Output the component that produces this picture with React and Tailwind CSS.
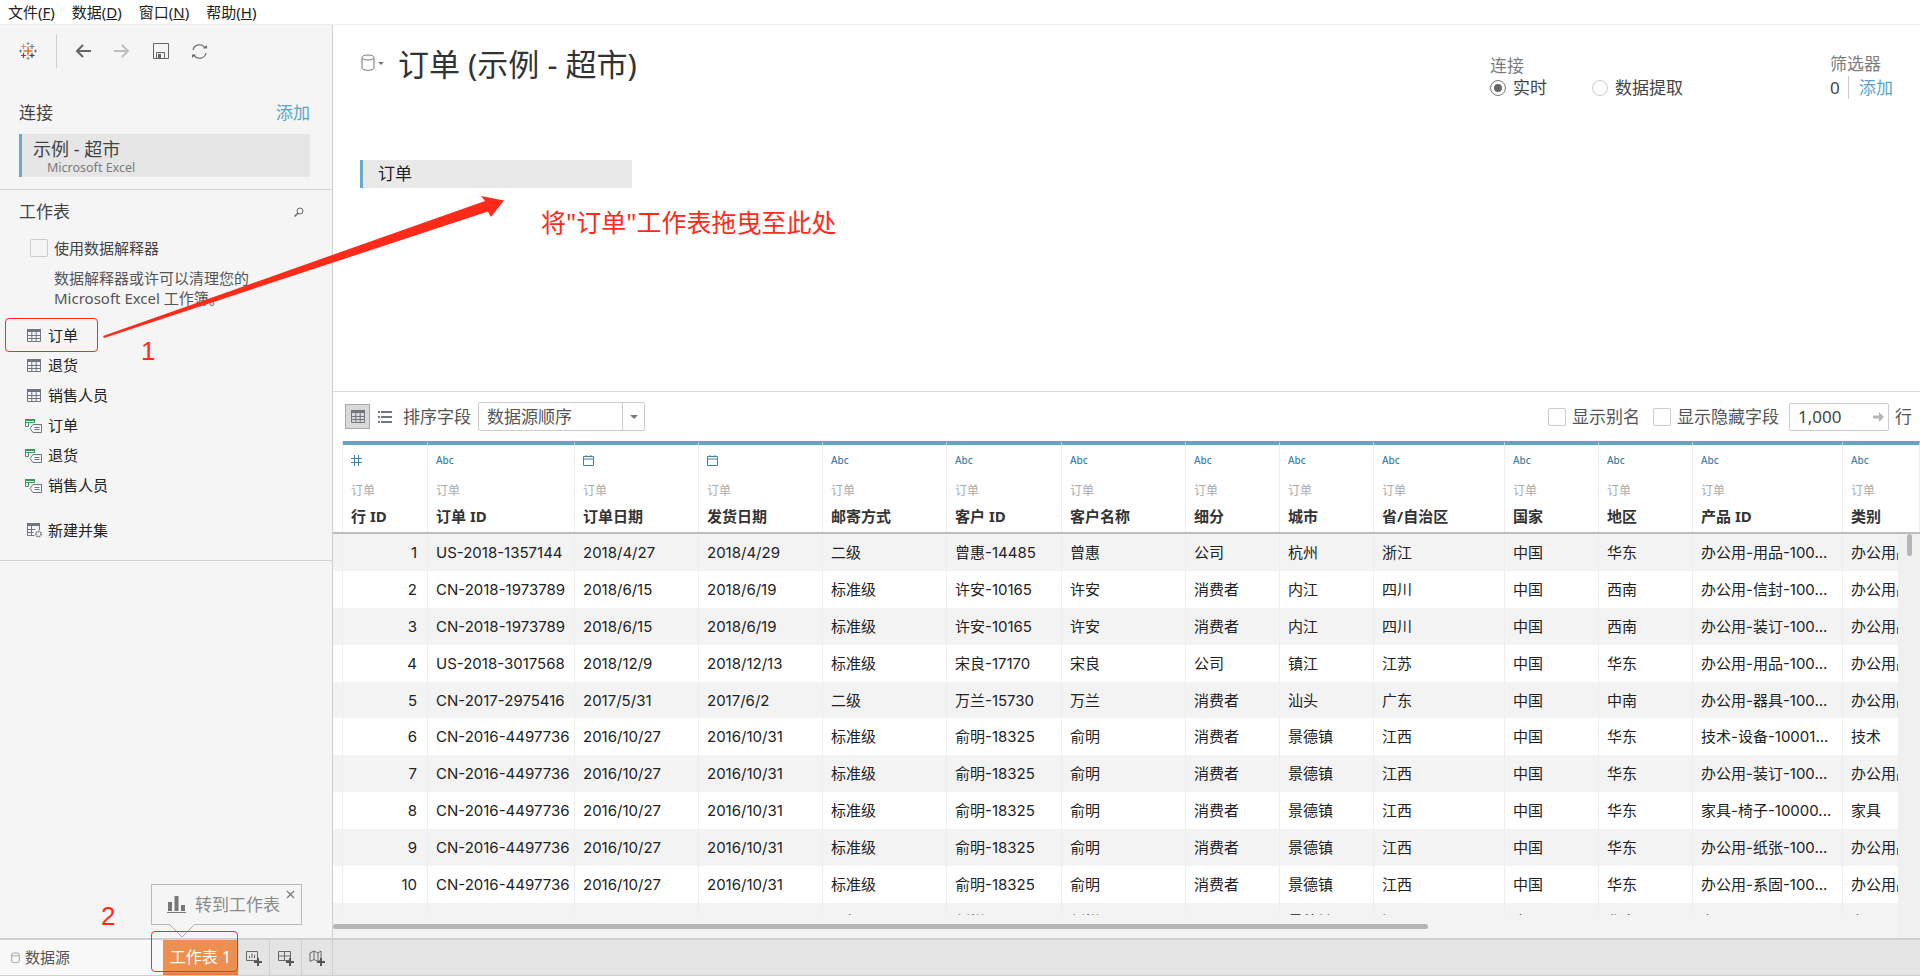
import React from 'react';

const FONT = "font-['Noto_Sans','Noto_Sans_CJK_SC',sans-serif]";
const GRID = 'grid grid-cols-[10px_85px_147px_124px_124px_124px_115px_124px_94px_94px_131px_94px_94px_150px_1fr]';

const columns = [
  ['num', '行 ID'],
  ['abc', '订单 ID'],
  ['date', '订单日期'],
  ['date', '发货日期'],
  ['abc', '邮寄方式'],
  ['abc', '客户 ID'],
  ['abc', '客户名称'],
  ['abc', '细分'],
  ['abc', '城市'],
  ['abc', '省/自治区'],
  ['abc', '国家'],
  ['abc', '地区'],
  ['abc', '产品 ID'],
  ['abc', '类别'],
];

const rows = [
  ['1', 'US-2018-1357144', '2018/4/27', '2018/4/29', '二级', '曾惠-14485', '曾惠', '公司', '杭州', '浙江', '中国', '华东', '办公用-用品-100...', '办公用品'],
  ['2', 'CN-2018-1973789', '2018/6/15', '2018/6/19', '标准级', '许安-10165', '许安', '消费者', '内江', '四川', '中国', '西南', '办公用-信封-100...', '办公用品'],
  ['3', 'CN-2018-1973789', '2018/6/15', '2018/6/19', '标准级', '许安-10165', '许安', '消费者', '内江', '四川', '中国', '西南', '办公用-装订-100...', '办公用品'],
  ['4', 'US-2018-3017568', '2018/12/9', '2018/12/13', '标准级', '宋良-17170', '宋良', '公司', '镇江', '江苏', '中国', '华东', '办公用-用品-100...', '办公用品'],
  ['5', 'CN-2017-2975416', '2017/5/31', '2017/6/2', '二级', '万兰-15730', '万兰', '消费者', '汕头', '广东', '中国', '中南', '办公用-器具-100...', '办公用品'],
  ['6', 'CN-2016-4497736', '2016/10/27', '2016/10/31', '标准级', '俞明-18325', '俞明', '消费者', '景德镇', '江西', '中国', '华东', '技术-设备-10001...', '技术'],
  ['7', 'CN-2016-4497736', '2016/10/27', '2016/10/31', '标准级', '俞明-18325', '俞明', '消费者', '景德镇', '江西', '中国', '华东', '办公用-装订-100...', '办公用品'],
  ['8', 'CN-2016-4497736', '2016/10/27', '2016/10/31', '标准级', '俞明-18325', '俞明', '消费者', '景德镇', '江西', '中国', '华东', '家具-椅子-10000...', '家具'],
  ['9', 'CN-2016-4497736', '2016/10/27', '2016/10/31', '标准级', '俞明-18325', '俞明', '消费者', '景德镇', '江西', '中国', '华东', '办公用-纸张-100...', '办公用品'],
  ['10', 'CN-2016-4497736', '2016/10/27', '2016/10/31', '标准级', '俞明-18325', '俞明', '消费者', '景德镇', '江西', '中国', '华东', '办公用-系固-100...', '办公用品'],
  ['11', 'CN-2015-4947890', '2015/12/22', '2015/12/24', '二级', '刘婵-20020', '刘婵', '公司', '景德镇', '江西', '中国', '华东', '办公用-用品-100...', '办公用品'],
];

const sheets = [
  ['table', '订单'],
  ['table', '退货'],
  ['table', '销售人员'],
  ['extract', '订单'],
  ['extract', '退货'],
  ['extract', '销售人员'],
];

const TableIcon = () => (
  <svg width="14" height="13" viewBox="0 0 14 13" className="shrink-0">
    <rect x="0" y="0" width="14" height="3" fill="#6f7683" />
    <path d="M.5 3v9.5h13V3M.5 6.5h13M.5 9.5h13M4.8 3v9.5M9.2 3v9.5" fill="none" stroke="#6f7683" />
  </svg>
);

const ExtractIcon = () => (
  <svg width="17" height="14" viewBox="0 0 17 14" className="shrink-0">
    <path d="M.5.5h9v3h-9zM.5 3.5v4h3v-4M3.5 3.5h6" fill="none" stroke="#2f9e5b" />
    <rect x="0" y="0" width="10" height="2" fill="#2f9e5b" />
    <path d="M8 5.5h8.5v8H8L5 9.5z" fill="#f5f5f5" stroke="#6f7683" />
    <path d="M9.5 8.5h5M9.5 10.5h5" stroke="#6f7683" />
  </svg>
);

const UnionIcon = () => (
  <svg width="16" height="15" viewBox="0 0 16 15" className="shrink-0">
    <rect x="0" y="0" width="13" height="3" fill="#6f7683" />
    <path d="M.5 3v9.5h7M12.5 3v4M.5 6.5h8M.5 9.5h6M4.5 3v9" fill="none" stroke="#6f7683" />
    <circle cx="11.5" cy="11" r="2.6" fill="none" stroke="#6f7683" strokeWidth="1.6" strokeDasharray="1.6 .7" />
  </svg>
);

const TableauLogo = () => (
  <svg width="18" height="18" viewBox="0 0 18 18">
    <path d="M9 4.5v9M4.5 9h9" stroke="#e8762b" strokeWidth="1.5" />
    <path d="M4.5 2v5M2 4.5h5" stroke="#f0913a" strokeWidth="1.2" />
    <path d="M13 2v5M10.5 4.5h5" stroke="#5b879b" strokeWidth="1.2" />
    <path d="M4.5 11v5M2 13.5h5" stroke="#c72037" strokeWidth="1.2" />
    <path d="M13 11v5M10.5 13.5h5" stroke="#1f447a" strokeWidth="1.2" />
    <path d="M9 0v3M7.5 1.5h3M9 15v3M7.5 16.5h3" stroke="#7099a6" />
    <path d="M1.5 7.5v3M0 9h3M16.5 7.5v3M15 9h3" stroke="#59879b" />
  </svg>
);

const Cylinder = ({ className = 'w-[14px] h-[18px]' }) => (
  <svg viewBox="0 0 14 18" className={className} fill="none" stroke="#777">
    <path d="M1 4v10c0 3 12 3 12 0V4" />
    <ellipse cx="7" cy="3.5" rx="6" ry="2.5" />
  </svg>
);

const FieldIcon = ({ type }) => {
  if (type === 'abc') return <span className="block text-[10px] leading-[12px] font-medium text-[#3f83a3]">Abc</span>;
  if (type === 'date') {
    return (
      <svg width="11" height="11" viewBox="0 0 11 11" fill="none" stroke="#3f83a3" className="mt-[1px]">
        <path d="M.5 1.5h10v9H.5zM.5 4h10M3 0v2M8 0v2" />
      </svg>
    );
  }
  return (
    <svg width="11" height="11" viewBox="0 0 11 11" fill="none" stroke="#3f83a3" className="mt-[1px]">
      <path d="M3.5 0v11M7.5 0v11M0 3.5h11M0 7.5h11" />
    </svg>
  );
};

const Checkbox = () => (
  <span className="block w-[18px] h-[18px] shrink-0 rounded-[2px] border border-[#cccccc]" />
);

const AddIcon = ({ d }) => (
  <svg width="16" height="16" viewBox="0 0 16 16" fill="none" stroke="#666">
    <path d={d} />
    <path d="M12 8v8M8 12h8" stroke="#555" strokeWidth="2" />
  </svg>
);

const Sidebar = () => (
  <aside className="w-[333px] shrink-0 border-r border-[#cfcfcf] bg-[#f5f5f5]">
    <div className="flex h-[34px] mt-[9px] items-center">
      <div className="ml-[19px] w-[18px]"><TableauLogo /></div>
      <div className="ml-[19px] h-[34px] w-px bg-[#cfcfcf]" />
      <svg width="16" height="14" viewBox="0 0 16 14" fill="none" stroke="#666" strokeWidth="2" className="ml-[18px]">
        <path d="M16 7H2M8 1L2 7l6 6" />
      </svg>
      <svg width="16" height="14" viewBox="0 0 16 14" fill="none" stroke="#bdbdbd" strokeWidth="2" className="ml-[23px]">
        <path d="M0 7h14M8 1l6 6-6 6" />
      </svg>
      <svg width="16" height="16" viewBox="0 0 16 16" fill="none" stroke="#666" className="ml-[23px]">
        <path d="M.5.5h15v15H.5zM3.5 15.5v-6h8v6" />
        <rect x="5" y="11" width="3" height="4" fill="#666" stroke="none" />
      </svg>
      <svg width="17" height="17" viewBox="0 0 17 17" fill="none" stroke="#666" strokeWidth="1.2" className="ml-[22px]">
        <path d="M2 7a6.500 6.500 0 0 1 12-2M15 10a6.500 6.500 0 0 1-12 2" />
        <path d="M12 5.500h4v-3.500z" fill="#666" stroke="none" />
        <path d="M5 11.500H1V15z" fill="#666" stroke="none" />
      </svg>
    </div>

    <div className="mt-[33px] mx-[19px] flex h-[24px] w-[291px] items-center justify-between text-[17px] text-[#444]">
      <span>连接</span>
      <span className="text-[#5aa3c7]">添加</span>
    </div>
    <div className="mt-[9px] ml-[19px] h-[43px] w-[291px] border-l-[3px] border-[#6aa9c7] bg-[#e6e6e6] pl-[11px]">
      <div className="h-[26px] text-[18px] leading-[31px] text-[#444]">示例 - 超市</div>
      <div className="pl-[14px] text-[12.5px] leading-[16px] text-[#7a7a7a]">Microsoft Excel</div>
    </div>

    <div className="mt-[12px] border-t border-[#d4d4d4] pt-[10px]">
      <div className="mx-[19px] flex h-[24px] items-center justify-between text-[17px] text-[#444]">
        <span>工作表</span>
        <svg width="10" height="10" viewBox="0 0 10 10" fill="none" stroke="#666" className="mr-[9px]">
          <circle cx="6" cy="4" r="3" />
          <path d="M4 6L.5 9.5" strokeWidth="1.5" />
        </svg>
      </div>
      <div className="mt-[13px] ml-[30px] flex items-center gap-[6px] text-[15px] text-[#444]">
        <Checkbox />
        <span>使用数据解释器</span>
      </div>
      <p className="mt-[8px] ml-[54px] w-[270px] text-[15px] leading-[20px] text-[#555]">
        数据解释器或许可以清理您的
        <br />
        Microsoft Excel 工作簿。
      </p>
      <ul className="mt-[13px]">
        {sheets.map(([type, name], i) => (
          <li key={i} className="flex h-[30px] items-center text-[15px] text-[#222]">
            <span className="ml-[25px] flex w-[23px] justify-start">
              {type === 'table' ? <span className="ml-[2px]"><TableIcon /></span> : <ExtractIcon />}
            </span>
            {name}
          </li>
        ))}
      </ul>
      <div className="mt-[15px] ml-[27px] flex h-[30px] items-center text-[15px] text-[#222]">
        <span className="w-[21px]"><UnionIcon /></span>
        新建并集
      </div>
      <div className="mt-[14px] border-t border-[#d4d4d4]" />
    </div>
  </aside>
);

const Header = () => (
  <section className="h-[367px] shrink-0 border-b border-[#d9d9d9] bg-white">
    <div className="flex items-start pt-[19px]">
      <div className="ml-[28px] mt-[10px] flex items-center">
        <Cylinder />
        <span className="ml-[3px] h-0 w-0 border-x-[3px] border-t-[3px] border-x-transparent border-t-[#777]" />
      </div>
      <h1 className="ml-[14px] text-[31px] leading-[40px] text-[#333]">订单 (示例 - 超市)</h1>
      <div className="ml-auto mt-[11px] w-[340px] text-[17px] leading-[22px]">
        <div className="text-[#7c7c7c]">连接</div>
        <div className="flex items-center text-[#444]">
          <span className="flex h-[16px] w-[16px] items-center justify-center rounded-full border border-[#777]">
            <span className="h-[8px] w-[8px] rounded-full bg-[#666]" />
          </span>
          <span className="ml-[7px] w-[79px]">实时</span>
          <span className="h-[16px] w-[16px] rounded-full border border-[#cccccc]" />
          <span className="ml-[7px]">数据提取</span>
        </div>
      </div>
      <div className="mt-[9px] w-[90px] text-[17px] leading-[22px]">
        <div className="text-[#7c7c7c]">筛选器</div>
        <div className="mt-[1px] flex items-center">
          <span className="w-[18px] text-[#444]">0</span>
          <span className="h-[23px] w-px bg-[#cccccc]" />
          <span className="ml-[10px] text-[#5aa3c7]">添加</span>
        </div>
      </div>
    </div>
    <div className="mt-[61px] ml-[27px] flex h-[28px] w-[272px] items-center border-l-[3px] border-[#6aa9c7] bg-[#e9e9e9] pl-[15px] text-[17px] text-[#222]">
      订单
    </div>
  </section>
);

const Toolbar = () => (
  <div className="flex h-[49px] shrink-0 items-center bg-white text-[17px] text-[#555]">
    <span className="ml-[12px] flex h-[25px] w-[25px] items-center justify-center border border-[#aaa] bg-[#d9d9d9]">
      <TableIcon />
    </span>
    <svg width="14" height="12" viewBox="0 0 14 12" fill="#6f7683" className="ml-[8px]">
      <path d="M0 0h2v2H0zM3 0h11v2H3zM0 5h2v2H0zM3 5h11v2H3zM0 10h2v2H0zM3 10h11v2H3z" />
    </svg>
    <span className="ml-[11px]">排序字段</span>
    <div className="ml-[7px] flex h-[29px] w-[167px] items-center rounded-[2px] border border-[#cccccc]">
      <span className="ml-[8px] w-[135px]">数据源顺序</span>
      <span className="flex h-full flex-1 items-center justify-center border-l border-[#cccccc]">
        <span className="h-0 w-0 border-x-[4px] border-t-[4px] border-x-transparent border-t-[#777]" />
      </span>
    </div>
    <div className="ml-auto flex items-center">
      <Checkbox />
      <span className="ml-[6px]">显示别名</span>
      <span className="ml-[13px]"><Checkbox /></span>
      <span className="ml-[6px]">显示隐藏字段</span>
      <div className="ml-[10px] flex h-[28px] w-[100px] items-center justify-between rounded-[2px] border border-[#cccccc] pl-[8px] pr-[4px] text-[#444]">
        1,000
        <svg width="11" height="10" viewBox="0 0 11 10" fill="#b5b5b5">
          <path d="M0 3.5h6V0l5 5-5 5V6.5H0z" />
        </svg>
      </div>
      <span className="ml-[6px] mr-[8px]">行</span>
    </div>
  </div>
);

const DataGrid = () => (
  <div className="flex min-h-0 flex-1 flex-col">
    <div className={`${GRID} h-[93px] shrink-0 border-b-2 border-[#bdbdbd] bg-white`}>
      <div className="border-r border-[#eeeeee]" />
      {columns.map(([type, name], i) => (
        <div key={i} className="flex flex-col border-t-4 border-r border-[#eeeeee] border-t-[#62a3c1] pl-2 pt-[9px]">
          <div className="h-[12px] leading-[12px]"><FieldIcon type={type} /></div>
          <div className="mt-[17px] text-[12px] leading-[16px] text-[#aaaaaa]">订单</div>
          <div className="mt-[7px] whitespace-nowrap text-[15px] font-bold leading-[20px] text-[#333]">{name}</div>
        </div>
      ))}
    </div>
    <div className="flex min-h-0 flex-1">
      <div className="flex w-[1566px] flex-col">
        <div className="h-[381px] overflow-hidden font-['Inter','Noto_Sans_CJK_SC',sans-serif]">
          {rows.map((row, r) => (
            <div key={r} className={`${GRID} h-[36.9px] text-[15px] leading-[37px] text-[#222] ${r % 2 === 0 ? 'bg-[#f3f3f3]' : 'bg-white'}`}>
              <div className="border-r border-[#eeeeee]" />
              {row.map((cell, c) => (
                <div key={c} className={`overflow-hidden whitespace-nowrap border-r border-[#eeeeee] ${c === 0 ? 'pr-[10px] text-right' : 'pl-2'}`}>
                  {cell}
                </div>
              ))}
            </div>
          ))}
        </div>
        <div className="flex-1 bg-[#f3f3f3] pt-[9px]">
          <div className="h-[5px] w-[1095px] rounded-full bg-[#b5b5b5]" />
        </div>
      </div>
      <div className="flex-1 bg-[#f0f0f0]">
        <div className="ml-[8px] h-[22px] w-[5px] rounded-full bg-[#b5b5b5]" />
      </div>
    </div>
  </div>
);

const BottomBar = () => (
  <footer className="flex h-[38px] shrink-0 border-t-2 border-b border-[#cfcfcf] bg-[#e4e4e4]">
    <div className="flex w-[163px] items-center bg-[#f8f8f8] pl-[11px] text-[15px] text-[#555]">
      <Cylinder className="w-[9px] h-[12px]" />
      <span className="ml-[5px]">数据源</span>
    </div>
    <div className="flex w-[75px] items-center justify-center border-b-2 border-[#ea7a3a] bg-[#ed8f50] text-[16px] text-white">
      工作表 1
    </div>
    <div className="flex w-[32px] items-center justify-center border-x border-[#cfcfcf]">
      <AddIcon d="M.5 1.5h11v9H.5zM3.5 8V6M6 8V3.5M8.5 8V5" />
    </div>
    <div className="flex w-[32px] items-center justify-center border-r border-[#cfcfcf]">
      <AddIcon d="M.5 1.5h12v9H.5zM.5 6h12M6.5 1.5v9" />
    </div>
    <div className="flex w-[31px] items-center justify-center border-r border-[#cfcfcf]">
      <AddIcon d="M1 3l4-2 4 2 3-2v9l-3 1.5-4-2-4 2zM5 1v8.500M9 3v8.500" />
    </div>
  </footer>
);

// tooltip and the red marks drawn on top of the screenshot
const Overlays = () => (
  <>
    <div className="absolute left-[151px] top-[884px] flex h-[41px] w-[151px] items-center border border-[#bbbbbb] bg-[#f5f5f5] pl-[15px] text-[17px] text-[#8a8a8a]">
      <svg width="19" height="17" viewBox="0 0 19 17" fill="#777">
        <path d="M1 6h4v9H1zM7.5 0h4v15h-4zM14 9h4v6h-4zM0 16h19v1H0z" />
      </svg>
      <span className="ml-[9px]">转到工作表</span>
      <svg width="9" height="9" viewBox="0 0 9 9" stroke="#777" className="absolute right-[6px] top-[5px]">
        <path d="M1 1l7 7M8 1l-7 7" strokeWidth="1.2" />
      </svg>
    </div>
    <svg width="28" height="14" viewBox="0 0 28 14" className="absolute left-[168px] top-[924px]">
      <path d="M1 0l13 13L27 0" fill="#f5f5f5" stroke="#aaaaaa" />
    </svg>

    <div className="absolute left-[5px] top-[318px] h-[34px] w-[93px] rounded-[4px] border border-[#ff2a1a]" />
    <div className="absolute left-[151px] top-[931px] h-[41px] w-[87px] rounded-[4px] border border-[#ff2a1a]" />
    <svg width="1920" height="976" className="pointer-events-none absolute left-0 top-0">
      <path d="M103 336L485 201 481 196 504 200.5 491 217 488 211.5 104 338z" fill="#ff2a1a" />
    </svg>
    <span className="absolute left-[141px] top-[335px] font-['Liberation_Sans',sans-serif] text-[26px] leading-[32px] text-[#ff2a1a]">1</span>
    <span className="absolute left-[101px] top-[900px] font-['Liberation_Sans',sans-serif] text-[26px] leading-[32px] text-[#ff2a1a]">2</span>
    <span className="absolute left-[541px] top-[206px] whitespace-nowrap text-[25px] leading-[32px] text-[#ff2a1a]">将"订单"工作表拖曳至此处</span>
  </>
);

export default function App() {
  return (
    <div className={`relative flex h-[976px] w-[1920px] flex-col overflow-hidden bg-white ${FONT}`}>
      <nav className="flex h-[25px] shrink-0 items-center gap-[17px] border-b border-[#eeeeee] pl-[8px] text-[15px] text-[#222]">
        <span>文件(<u>F</u>)</span>
        <span>数据(<u>D</u>)</span>
        <span>窗口(<u>N</u>)</span>
        <span>帮助(<u>H</u>)</span>
      </nav>
      <div className="flex min-h-0 flex-1">
        <Sidebar />
        <main className="flex min-w-0 flex-1 flex-col">
          <Header />
          <Toolbar />
          <DataGrid />
        </main>
      </div>
      <BottomBar />
      <Overlays />
    </div>
  );
}
